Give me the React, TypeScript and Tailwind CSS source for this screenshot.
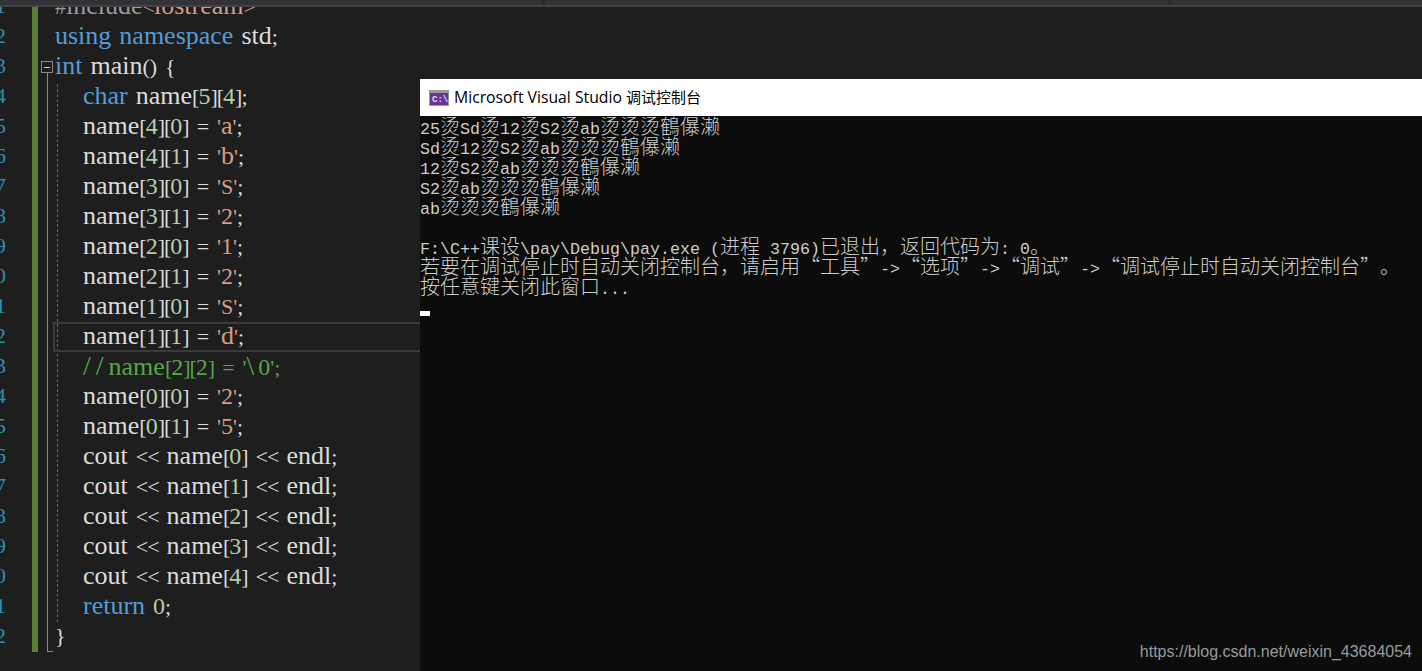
const codeBlue = "text-[#569cd6]";
const numGreen = "text-[#b5cea8]";
const strOrange = "text-[#d69d85]";
const commentGreen = "text-[#57a64a]";

type Part = [string, string?];

const assign = (a: string, b: string, c: string): Part[] => [
  ["    name["],
  [a, numGreen],
  ["]["],
  [b, numGreen],
  ["] = "],
  [`'${c}'`, strOrange],
  [";"],
];

const printLine = (n: string): Part[] => [
  ["    cout << name["],
  [n, numGreen],
  ["] << endl;"],
];

const lines: Part[][] = [
  [["#include", "text-[#9b9b9b]"], ["<iostream>", strOrange]],
  [["using namespace", codeBlue], [" std;"]],
  [["int", codeBlue], [" main() {"]],
  [["    "], ["char", codeBlue], [" name["], ["5", numGreen], ["]["], ["4", numGreen], ["];"]],
  assign("4", "0", "a"),
  assign("4", "1", "b"),
  assign("3", "0", "S"),
  assign("3", "1", "2"),
  assign("2", "0", "1"),
  assign("2", "1", "2"),
  assign("1", "0", "S"),
  assign("1", "1", "d"),
  [
    ["    "],
    ["//", `${commentGreen} !text-[28px] !tracking-[5px]`],
    ["name[2][2] = '", commentGreen],
    ["\\", `${commentGreen} !text-[28px] !tracking-[4px]`],
    ["0';", commentGreen],
  ],
  assign("0", "0", "2"),
  assign("0", "1", "5"),
  printLine("0"),
  printLine("1"),
  printLine("2"),
  printLine("3"),
  printLine("4"),
  [["    "], ["return", codeBlue], [" "], ["0", numGreen], [";"]],
  [["}"]],
];

const consoleLines = [
  "25烫Sd烫12烫S2烫ab烫烫烫鶴儤濑",
  "Sd烫12烫S2烫ab烫烫烫鶴儤濑",
  "12烫S2烫ab烫烫烫鶴儤濑",
  "S2烫ab烫烫烫鶴儤濑",
  "ab烫烫烫鶴儤濑",
  "",
  "F:\\C++课设\\pay\\Debug\\pay.exe (进程 3796)已退出，返回代码为: 0。",
  "若要在调试停止时自动关闭控制台，请启用“工具”->“选项”->“调试”->“调试停止时自动关闭控制台”。",
  "按任意键关闭此窗口...",
];

// the editor font has big lowercase and narrow brackets, so each kind of run gets its own size
function CodeRun({ text, color }: { text: string; color?: string }) {
  const runs = text.match(/[a-z]+|\s+|[0-9]+|[[\]<>]+|[^a-z0-9\s[\]<>]+/g) ?? [];
  return (
    <>
      {runs.map((run, i) => {
        if (/^\s/.test(run)) {
          return <span key={i} className={run.length === 4 ? "inline-block w-7" : "inline-block w-2"} />;
        }
        let size = "text-[22px]";
        if (/^[a-z]/.test(run)) size = "text-[26px]";
        if (/^[0-9]/.test(run)) size = "text-[24px]";
        if (/^[[\]<>]/.test(run)) size = "text-[22px] tracking-[-1px]";
        return (
          <span key={i} className={`${size} ${color ?? ""}`}>
            {run}
          </span>
        );
      })}
    </>
  );
}

// latin runs are half width, cjk runs full width, like the console font
function ConsoleLine({ text }: { text: string }) {
  const runs = text.match(/[\x20-\x7e]+|[^\x20-\x7e]+/g) ?? [];
  return (
    <div className="h-5 whitespace-pre leading-5">
      {runs.map((run, i) =>
        /^[\x20-\x7e]/.test(run) ? (
          <span key={i} className="font-['Liberation_Mono',monospace] text-[16.67px]">
            {run}
          </span>
        ) : (
          <span key={i} className="font-['Noto_Sans_CJK_SC',serif] text-[20px] font-light [text-spacing-trim:space-all]">
            {run}
          </span>
        ),
      )}
    </div>
  );
}

function FoldGutter() {
  return (
    <div className="relative w-[21px] shrink-0">
      <div className="absolute left-0 top-0 h-[645px] w-1.5 bg-[#5b7f34]" />
      <div className="absolute left-[9px] top-[54px] flex h-3 w-3 items-center justify-center border border-[#8a8a8a] bg-[#1e1e1e]">
        <div className="h-px w-[6px] bg-[#d0d0d0]" />
      </div>
      <div className="absolute left-[15px] top-[66px] h-[578px] w-px bg-[#8a8a8a]" />
      <div className="absolute left-[15px] top-[644px] h-px w-[6px] bg-[#8a8a8a]" />
    </div>
  );
}

function Editor() {
  return (
    <div className="relative flex h-full w-[420px] shrink-0">
      <div className="w-8 shrink-0 overflow-hidden">
        <div className="-mt-4 font-['Liberation_Serif',serif] text-[22px] leading-[30px] text-[#2b91af]">
          {lines.map((_, i) => (
            <div key={i} className="flex h-[30px] justify-end pr-[26px]">
              {i + 1}
            </div>
          ))}
        </div>
      </div>
      <FoldGutter />
      <div className="relative min-w-0 flex-1">
        <div className="absolute left-[4px] top-[77px] h-[538px] border-l border-dashed border-[#666666]" />
        <div className="absolute left-0 right-0 top-[315px] h-[30px] border-y-2 border-l-2 border-[#3a3a3a]" />
        <div className="relative -mt-4 whitespace-pre pl-[2px] font-['Liberation_Serif',serif] leading-[30px] text-[#dcdcdc]">
          {lines.map((parts, i) => (
            <div key={i} className="h-[30px]">
              {parts.map(([text, color], j) => (
                <CodeRun key={j} text={text} color={color} />
              ))}
            </div>
          ))}
        </div>
      </div>
    </div>
  );
}

function ConsoleWindow() {
  return (
    <div className="flex min-w-0 flex-1 flex-col pt-[72px]">
      <div className="flex h-[37px] items-center gap-[5px] bg-white pl-[9px]">
        <svg width="20" height="16" viewBox="0 0 20 16">
          <rect x="0" y="0" width="20" height="16" fill="#9a9a9a" />
          <rect x="1" y="3" width="18" height="12" fill="#68349c" />
          <text x="3" y="12" fontSize="9" fontWeight="700" fill="#e8e0f0" fontFamily="Liberation Mono, monospace">
            C:\
          </text>
        </svg>
        <span className="font-['Open_Sans',sans-serif] text-[15.75px] text-black">
          Microsoft Visual Studio <span className="font-['Noto_Sans_CJK_SC',sans-serif] text-[15px]">调试控制台</span>
        </span>
      </div>
      <div className="flex-1 bg-[#0c0c0c] text-[#cccccc]">
        {consoleLines.map((line, i) => (
          <ConsoleLine key={i} text={line} />
        ))}
        <div className="mt-[15px] h-[5px] w-[10px] bg-white" />
      </div>
    </div>
  );
}

export default function App() {
  return (
    <div className="relative flex h-[671px] w-[1422px] flex-col overflow-hidden bg-[#1e1e1e]">
      <div className="relative z-10 flex h-[7px] shrink-0 border-b-2 border-[#424247] bg-[#333337]">
        <div className="w-[541px]" />
        <div className="w-1 bg-[#2a2a2c]" />
        <div className="w-[623px]" />
        <div className="w-1 bg-[#2a2a2c]" />
      </div>
      <div className="flex min-h-0 flex-1">
        <Editor />
        <ConsoleWindow />
      </div>
      <span className="absolute bottom-[10px] right-[10px] font-['Liberation_Sans',sans-serif] text-[16px] leading-[18px] text-[#9a9a9a]">
        https://blog.csdn.net/weixin_43684054
      </span>
    </div>
  );
}
